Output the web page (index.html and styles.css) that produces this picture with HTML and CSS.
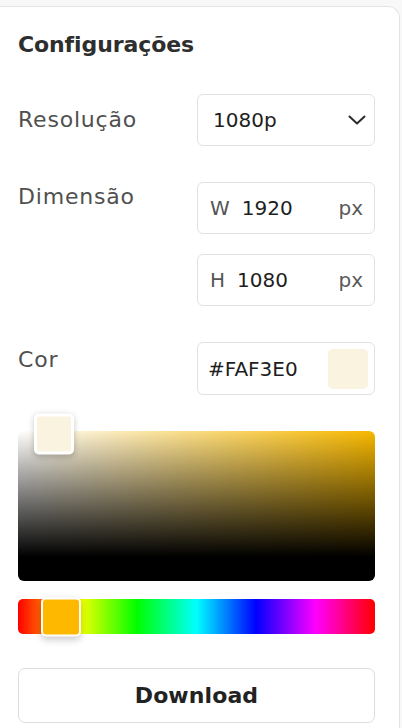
FILE: index.html
```html
<!DOCTYPE html>
<html lang="pt">
<head>
<meta charset="utf-8">
<title>Configurações</title>
<link rel="stylesheet" href="styles.css">
</head>
<body>
<div class="panel">
  <h2 class="title">Configurações</h2>

  <div class="row row-center">
    <span class="label">Resolução</span>
    <div class="field select">
      <span class="value">1080p</span>
      <svg class="chevron" width="18" height="10" viewBox="0 0 18 10" aria-hidden="true">
        <path d="M1.5 1.5 L9 8.5 L16.5 1.5" fill="none" stroke="#2b2b2b" stroke-width="2" stroke-linecap="round" stroke-linejoin="round"/>
      </svg>
    </div>
  </div>

  <div class="row row-top">
    <span class="label label-dim">Dimensão</span>
    <div class="stack">
      <div class="field">
        <span class="prefix">W</span>
        <span class="value">1920</span>
        <span class="unit">px</span>
      </div>
      <div class="field">
        <span class="prefix">H</span>
        <span class="value">1080</span>
        <span class="unit">px</span>
      </div>
    </div>
  </div>

  <div class="row row-top">
    <span class="label label-cor">Cor</span>
    <div class="field color-field">
      <span class="value hex">#FAF3E0</span>
      <span class="swatch"></span>
    </div>
  </div>

  <div class="sv">
    <div class="sv-thumb"></div>
  </div>

  <div class="hue">
    <div class="hue-thumb"></div>
  </div>

  <button class="download" type="button">Download</button>
</div>
</body>
</html>
```

FILE: styles.css
```css
html, body {
  margin: 0;
  padding: 0;
}

body {
  background: #f8f8f8;
  font-family: "DejaVu Sans", "Liberation Sans", sans-serif;
  overflow: hidden;
}

.panel {
  margin-top: 6px;
  width: 400px;
  min-height: 740px;
  box-sizing: border-box;
  background: #ffffff;
  border: 1px solid #e4e4e4;
  border-left: none;
  border-bottom: none;
  border-top-right-radius: 12px;
  padding: 24px 24px 0 18px;
  display: flex;
  flex-direction: column;
}

.title {
  margin: 0;
  font-size: 22px;
  line-height: 28px;
  font-weight: 700;
  color: #2e2e2e;
  letter-spacing: -0.1px;
}

.row {
  display: grid;
  grid-template-columns: 1fr 178px;
}

.row-center {
  margin-top: 35px;
  align-items: center;
}

.row-top {
  margin-top: 36px;
  align-items: start;
}

.label {
  font-size: 22px;
  line-height: 26px;
  color: #505050;
  letter-spacing: 0.8px;
}

.label-dim {
  padding-top: 2px;
}

.label-cor {
  padding-top: 5px;
}

.stack {
  display: flex;
  flex-direction: column;
  gap: 20px;
}

.field {
  height: 52px;
  box-sizing: border-box;
  border: 1px solid #e1e1e1;
  border-radius: 6px;
  display: flex;
  align-items: center;
  padding: 0 11px 0 12px;
  font-size: 20px;
  color: #222222;
}

.select {
  padding: 0 8px 0 15px;
  justify-content: space-between;
}

.prefix {
  color: #555555;
  margin-right: 12px;
}

.value {
  color: #1e1e1e;
}

.unit {
  margin-left: auto;
  color: #5a5a5a;
}

.color-field {
  height: 53px;
  padding: 0 6px 0 10px;
  justify-content: space-between;
}

.swatch {
  width: 40px;
  height: 40px;
  border-radius: 5px;
  background: #faf3e0;
}

.sv {
  position: relative;
  margin-top: 36px;
  height: 150px;
  border-radius: 6px;
  background:
    linear-gradient(to bottom, rgba(0,0,0,0) 0%, rgba(0,0,0,1) 84%),
    linear-gradient(to right, #ffffff 0%, rgba(255,255,255,0) 100%),
    #f7b800;
}

.sv-thumb {
  position: absolute;
  left: 10%;
  top: 2%;
  width: 40px;
  height: 41px;
  box-sizing: border-box;
  transform: translate(-50%, -50%);
  border: 3px solid #ffffff;
  border-radius: 5px;
  background: #faf3e0;
  box-shadow: 0 2px 6px rgba(0,0,0,0.22);
}

.hue {
  position: relative;
  margin-top: 18px;
  height: 35px;
  border-radius: 5px;
  background: linear-gradient(to right,
    #ff0000 0%,
    #ffff00 16.66%,
    #00ff00 33.33%,
    #00ffff 50%,
    #0000ff 66.66%,
    #ff00ff 83.33%,
    #ff0000 100%);
}

.hue-thumb {
  position: absolute;
  left: 12%;
  top: 50%;
  width: 40px;
  height: 39px;
  box-sizing: border-box;
  transform: translate(-50%, -50%);
  border: 2px solid #ffffff;
  border-radius: 5px;
  background: #ffb800;
  box-shadow: 0 3px 7px rgba(0,0,0,0.2);
}

.download {
  margin-top: 34px;
  height: 55px;
  width: 100%;
  box-sizing: border-box;
  border: 1px solid #dddddd;
  border-radius: 7px;
  background: #ffffff;
  font-family: "DejaVu Sans", "Liberation Sans", sans-serif;
  font-size: 22px;
  font-weight: 700;
  color: #222222;
  letter-spacing: 0.1px;
  cursor: pointer;
}
```
